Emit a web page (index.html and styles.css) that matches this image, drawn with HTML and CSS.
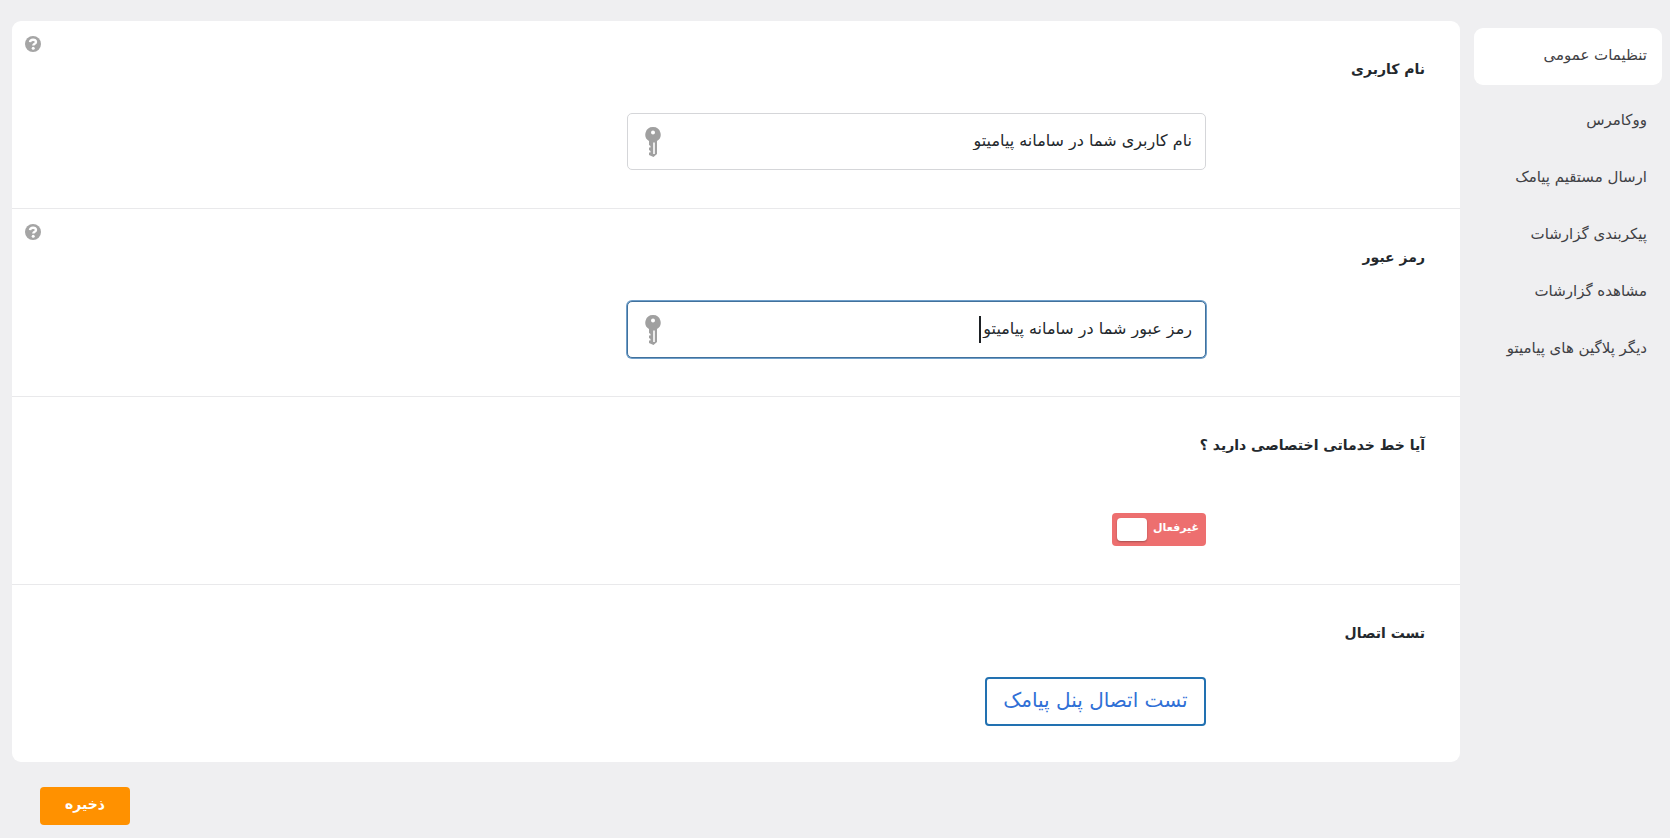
FILE: index.html
```html
<!DOCTYPE html>
<html lang="fa" dir="rtl">
<head>
    <meta charset="UTF-8">
    <meta name="viewport" content="width=device-width, initial-scale=1.0">
    <title>تنظیمات عمومی</title>
    <link rel="stylesheet" href="styles.css">
</head>
<body>
    <!-- shared icons -->
    <svg class="icons" aria-hidden="true">
        <symbol id="icon-key" viewBox="0 0 16 30">
            <path fill-rule="evenodd" d="M8 0a7.600 7.600 0 0 1 4 14.100V27L8.500 30 4 28V25.500H5.500V24L4 23V20.500H5.500V19L4 18V14.100A7.600 7.600 0 0 1 8 0zM8 3.400a2 2 0 1 0 0 4 2 2 0 0 0 0-4zM8.200 15.500V27h1.600V15.500z"/>
        </symbol>
        <symbol id="icon-help" viewBox="0 0 16 16">
            <circle cx="8" cy="8" r="8"/>
            <path d="M5 6.200C5.200 4.300 6.400 3.700 8.100 3.700c1.700 0 2.900.8 2.900 2.200 0 2-2.700 1.700-2.700 3.700" fill="none" stroke="#fff" stroke-width="2.400"/>
            <circle cx="8.200" cy="12.200" r="1.500" fill="#fff"/>
        </symbol>
    </svg>

    <div class="layout">
        <nav class="tabs">
            <a href="#general" class="tab active">تنظیمات عمومی</a>
            <a href="#woocommerce" class="tab">ووکامرس</a>
            <a href="#send" class="tab">ارسال مستقیم پیامک</a>
            <a href="#report-config" class="tab">پیکربندی گزارشات</a>
            <a href="#reports" class="tab">مشاهده گزارشات</a>
            <a href="#plugins" class="tab">دیگر پلاگین های پیامیتو</a>
        </nav>

        <form class="content">
            <div class="panel">
                <div class="row">
                    <label class="title" for="username">نام کاربری</label>
                    <div class="field">
                        <input type="text" id="username" value="نام کاربری شما در سامانه پیامیتو">
                        <svg class="key"><use href="#icon-key"/></svg>
                    </div>
                    <button type="button" class="help" aria-label="راهنما"><svg><use href="#icon-help"/></svg></button>
                </div>

                <div class="row">
                    <label class="title" for="password">رمز عبور</label>
                    <div class="field current">
                        <input type="text" id="password" value="رمز عبور شما در سامانه پیامیتو">
                        <span class="caret"></span>
                        <svg class="key"><use href="#icon-key"/></svg>
                    </div>
                    <button type="button" class="help" aria-label="راهنما"><svg><use href="#icon-help"/></svg></button>
                </div>

                <div class="row">
                    <label class="title" for="line">آیا خط خدماتی اختصاصی دارید ؟</label>
                    <label class="switch">
                        <input type="checkbox" id="line">
                        <span class="state">غیرفعال</span>
                        <span class="knob"></span>
                    </label>
                </div>

                <div class="row">
                    <h2 class="title">تست اتصال</h2>
                    <button type="button" class="test">تست اتصال پنل پیامک</button>
                </div>
            </div>

            <button type="submit" class="save">ذخیره</button>
        </form>
    </div>
</body>
</html>
```

FILE: styles.css
```css
* {
    margin: 0;
    padding: 0;
    box-sizing: border-box;
}
body {
    background-color: #efeff1;
    color: #23282d;
    font-family: "DejaVu Sans", sans-serif;
    font-size: 15px;
}
input, button {
    font-family: inherit;
    color: inherit;
}
.icons {
    display: none;
}
.layout {
    display: flex;
    gap: 14px;
    padding: 21px 8px 12px 12px;
}

/* Tabs */
.tabs {
    flex: 0 0 188px;
    padding-top: 7px;
}
.tab {
    display: flex;
    align-items: center;
    height: 57px;
    padding: 0 15px 4px;
    border-radius: 9px;
    color: #3f4145;
    font-size: 15px;
    text-decoration: none;
    white-space: nowrap;
}
.tab.active {
    background-color: #fff;
    margin-bottom: 8px;
}

/* Panel */
.content {
    flex: 1;
}
.panel {
    background-color: #fff;
    border-radius: 9px;
}
.row {
    position: relative;
    display: flex;
    flex-direction: column;
    align-items: flex-start;
    padding: 34px 35px 38px;
    min-height: 188px;
    border-bottom: 1px solid #e9e9eb;
}
.row:last-child {
    border-bottom: none;
    padding-bottom: 36px;
    min-height: 177px;
}
.title {
    font-size: 14px;
    font-weight: bold;
    line-height: 28px;
    margin-bottom: 30px;
}
.field {
    position: relative;
    width: 42%;
    margin-right: 219px;
}
.field input {
    display: block;
    width: 100%;
    height: 57px;
    padding: 0 13px 2px 50px;
    border: 1px solid #d5d6d9;
    border-radius: 5px;
    background-color: #fff;
    font-size: 16px;
    outline: none;
}
.field input:focus,
.field.current input {
    border-color: #41719c;
    box-shadow: 0 0 0 1px #6f9fca;
}
.caret {
    position: absolute;
    top: 15px;
    right: 225px;
    width: 2px;
    height: 27px;
    background-color: #1d2125;
}
.key {
    position: absolute;
    left: 18px;
    top: 14px;
    width: 16px;
    height: 30px;
    fill: #a0a0a0;
}
.help {
    position: absolute;
    left: 13px;
    top: 15px;
    width: 16px;
    height: 16px;
    border: none;
    background: none;
    cursor: pointer;
}
.help svg {
    display: block;
    width: 16px;
    height: 16px;
    fill: #a5a5a5;
}

/* Switch */
.switch {
    display: flex;
    align-items: center;
    justify-content: space-between;
    width: 94px;
    height: 33px;
    margin: 24px 219px 0 0;
    padding: 0 7px 0 5px;
    border-radius: 4px;
    background-color: #ed6f6f;
    color: #fff;
    cursor: pointer;
}
.switch input {
    position: absolute;
    opacity: 0;
}
.state {
    font-size: 11px;
    font-weight: bold;
    padding-bottom: 4px;
}
.knob {
    width: 30px;
    height: 23px;
    border-radius: 4px;
    background-color: #fff;
    box-shadow: 0 1px 2px rgba(0, 0, 0, 0.3);
}

/* Buttons */
.test {
    width: 221px;
    height: 49px;
    margin-right: 219px;
    padding-bottom: 4px;
    border: 2px solid #2271b1;
    border-radius: 4px;
    background-color: #fff;
    color: #3070d6;
    font-size: 20px;
    white-space: nowrap;
    cursor: pointer;
}
.save {
    display: block;
    width: 90px;
    height: 38px;
    margin: 25px auto 0 28px;
    padding-bottom: 5px;
    border: none;
    border-radius: 4px;
    background-color: #ff9100;
    color: #fff;
    font-size: 14px;
    font-weight: bold;
    cursor: pointer;
}
```
